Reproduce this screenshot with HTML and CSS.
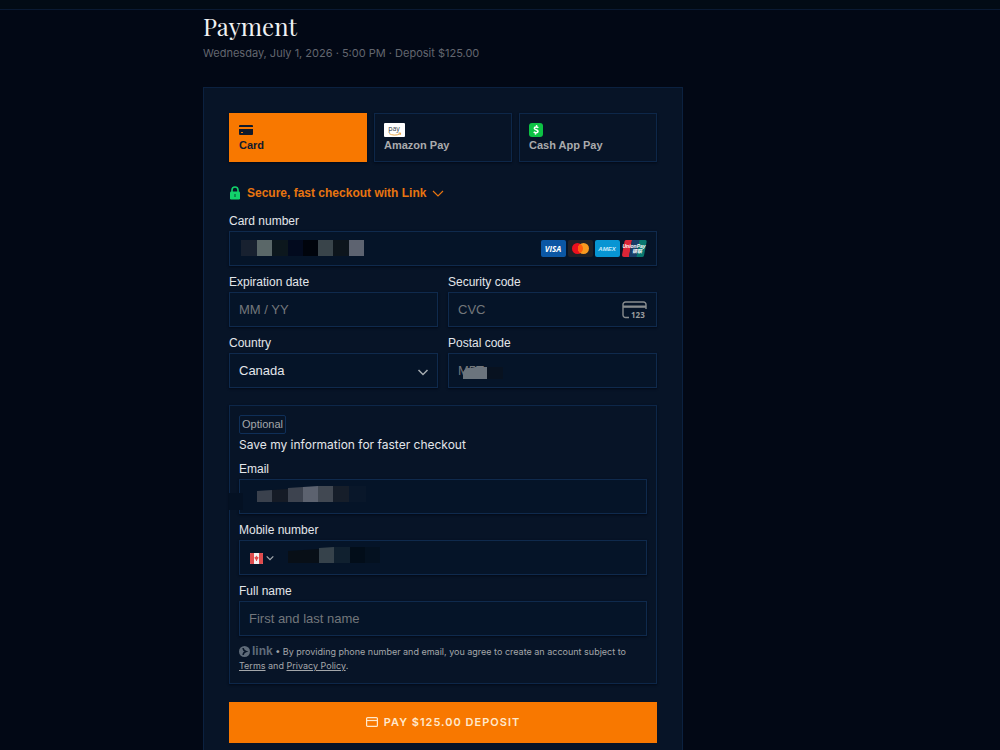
FILE: index.html
```
<!DOCTYPE html>
<html lang="en">
<head>
    <meta charset="UTF-8">
    <meta name="viewport" content="width=device-width, initial-scale=1.0">
    <title>Payment</title>
    <link rel="stylesheet" href="styles.css">
</head>
<body>
    <header class="topbar"></header>

    <main class="container">
        <h1>Payment</h1>
        <p class="summary">Wednesday, July 1, 2026 · 5:00 PM · Deposit $125.00</p>

        <form class="card">
            <div class="methods">
                <button type="button" class="method active">
                    <svg width="14" height="14" viewBox="0 0 14 14"><path d="M1 2h12a1 1 0 0 1 1 1v1H0V3a1 1 0 0 1 1-1z" fill="#101a2c"/><path d="M0 6h14v5a1 1 0 0 1-1 1H1a1 1 0 0 1-1-1z" fill="#101a2c"/><path d="M2 9h2v1H2z" fill="#f87800"/></svg>
                    <span>Card</span>
                </button>
                <button type="button" class="method">
                    <svg width="21" height="14" viewBox="0 0 21 14"><rect width="21" height="14" rx="1" fill="#fff"/><text x="10" y="8" text-anchor="middle" class="pay-text">pay</text><path d="M5 10.500c3 2 7.500 2.200 11 .3M14.500 10h2.200l-.6 2" fill="none" stroke="#e9a13b" stroke-width=".9"/></svg>
                    <span>Amazon Pay</span>
                </button>
                <button type="button" class="method">
                    <svg width="14" height="14" viewBox="0 0 14 14"><rect width="14" height="14" rx="3" fill="#0dc244"/><path d="M9.300 4.700C8.400 3.700 5.400 3.500 5.300 5.200c0 2 4 1.200 3.700 3.300-.3 1.700-3.100 1.500-4.300.4M7.700 2.200l-.3 1.500M6.700 10l-.3 1.700" fill="none" stroke="#fff" stroke-width="1.500"/></svg>
                    <span>Cash App Pay</span>
                </button>
            </div>

            <button type="button" class="link-toggle">
                <svg width="12" height="14" viewBox="0 0 12 14"><path d="M3 6V4a3 3 0 0 1 6 0v2" fill="none" stroke="#12d26b" stroke-width="1.600"/><rect x="1" y="5.500" width="10" height="8" rx="1.200" fill="#12d26b"/><path d="M5.400 8h1.200v3H5.400z" fill="#08603a"/></svg>
                <span>Secure, fast checkout with Link</span>
                <svg width="12" height="12" viewBox="0 0 12 12"><path d="M1 4l5 5 5-5" fill="none" stroke="#e87510" stroke-width="1.200"/></svg>
            </button>

            <div class="form-group first">
                <label for="number">Card number</label>
                <div class="control">
                    <input type="text" id="number">
                    <svg class="mask mask-number" width="123" height="16" viewBox="0 0 123 16" shape-rendering="crispEdges"><path d="M0 0h16v16H0z" fill="#182130"/><path d="M16 0h15v16H16z" fill="#5a6768"/><path d="M31 0h16v16H31z" fill="#0c171d"/><path d="M47 0h15v16H47z" fill="#020a1e"/><path d="M62 0h15v16H62z" fill="#00040c"/><path d="M77 0h15v16H77z" fill="#39444a"/><path d="M92 0h16v16H92z" fill="#0d151c"/><path d="M108 0h15v16h-15z" fill="#5d6370"/></svg>
                    <div class="brands">
                        <svg width="25" height="17" viewBox="0 0 25 17"><rect width="25" height="17" rx="2" fill="#0b57a4"/><text x="12" y="12" text-anchor="middle" class="visa-text">VISA</text></svg>
                        <svg width="25" height="17" viewBox="0 0 25 17"><rect width="25" height="17" rx="2" fill="#202127"/><circle cx="9.500" cy="8.500" r="5.500" fill="#eb101e"/><circle cx="15.500" cy="8.500" r="5.500" fill="#f79a20"/><path d="M12.500 3.900a5.500 5.500 0 0 1 0 9.200 5.500 5.500 0 0 1 0-9.200z" fill="#ff5c0c"/></svg>
                        <svg width="25" height="17" viewBox="0 0 25 17"><rect width="25" height="17" rx="2" fill="#0795d3"/><text x="12" y="11" text-anchor="middle" class="amex-text">AMEX</text></svg>
                        <svg width="25" height="17" viewBox="0 0 25 17"><path d="M4 0h6L7 17H2a2 2 0 0 1-2-2L2.500 1.500Q2.800 0 4 0z" fill="#dc2537"/><path d="M10 0h8l-3 17H7z" fill="#183d68"/><path d="M17.500 0H23q2 0 1.600 2L22 15.500Q21.700 17 20 17h-5.500z" fill="#08776f"/><text x="12" y="8" text-anchor="middle" class="union-text">UnionPay</text><text x="15" y="13" text-anchor="middle" class="union-text">银联</text></svg>
                    </div>
                </div>
            </div>

            <div class="form-row">
                <div class="form-group">
                    <label for="expiry">Expiration date</label>
                    <input type="text" id="expiry" placeholder="MM / YY">
                </div>
                <div class="form-group">
                    <label for="cvc">Security code</label>
                    <div class="control">
                        <input type="text" id="cvc" placeholder="CVC">
                        <svg class="cvc-icon" width="26" height="18" viewBox="0 0 26 18"><path d="M7 16.500H3.500a2.500 2.500 0 0 1-2.500-2.500V3.500A2.500 2.500 0 0 1 3.500 1h18A2.500 2.500 0 0 1 24 3.500V8" fill="none" stroke="#888c8e" stroke-width="1.400"/><path d="M1 4.500h23v2.300H1z" fill="#888c8e"/><text x="9" y="17" class="cvc-text">123</text></svg>
                    </div>
                </div>
            </div>

            <div class="form-row">
                <div class="form-group">
                    <label for="country">Country</label>
                    <div class="control">
                        <select id="country">
                            <option>Canada</option>
                        </select>
                        <svg class="chevron" width="12" height="12" viewBox="0 0 12 12"><path d="M1.500 4L6 8.500 10.500 4" fill="none" stroke="#a5abb0" stroke-width="1.500"/></svg>
                    </div>
                </div>
                <div class="form-group">
                    <label for="postal">Postal code</label>
                    <div class="control">
                        <input type="text" id="postal" placeholder="M5T">
                        <svg class="mask mask-postal" width="40" height="13" viewBox="0 0 40 13"><path d="M0 6l3-4h5l4-1h12v12H0z" fill="#6b747d"/><path d="M24 1h16v12H24z" fill="#081220"/></svg>
                    </div>
                </div>
            </div>

            <section class="save-info">
                <span class="badge">Optional</span>
                <p class="save-title">Save my information for faster checkout</p>

                <div class="form-group">
                    <label for="email">Email</label>
                    <div class="control">
                        <input type="email" id="email">
                        <svg class="mask mask-email" width="137" height="25" viewBox="0 0 137 25"><path d="M0 7h14v17H0z" fill="#041123"/><path d="M28 5l15-1v12H28z" fill="#3a414d"/><path d="M43 4l16-1v13H43z" fill="#151b26"/><path d="M59 2l15-1v15H59z" fill="#3d434f"/><path d="M74 1l15-1v16H74z" fill="#5c626f"/><path d="M89 0h15v16H89z" fill="#414852"/><path d="M104 0h16v16h-16z" fill="#161e2a"/><path d="M120 0h17v16h-17z" fill="#09172a"/></svg>
                    </div>
                </div>

                <div class="form-group">
                    <label for="phone">Mobile number</label>
                    <div class="control">
                        <input type="tel" id="phone">
                        <button type="button" class="flag" aria-label="Phone country">
                            <svg width="13" height="11" viewBox="0 0 13 11"><rect width="13" height="11" rx="1" fill="#f2efef"/><path d="M1 0h3v11H1a1 1 0 0 1-1-1V1a1 1 0 0 1 1-1zM9 0h3a1 1 0 0 1 1 1v9a1 1 0 0 1-1 1H9z" fill="#df4b4d"/><path d="M6.500 2.500l.8 1.300 1.400.6-1 2H7v1.600H6V6.400h-.7l-1-2 1.400-.6z" fill="#df4b4d"/></svg>
                            <svg width="8" height="8" viewBox="0 0 8 8"><path d="M.7 2.300L4 5.600l3.300-3.300" fill="none" stroke="#a5abb0" stroke-width="1.200"/></svg>
                        </button>
                        <svg class="mask mask-phone" width="92" height="16" viewBox="0 0 92 16"><path d="M0 4l31-2v14H0z" fill="#080f17"/><path d="M31 1l15-1v16H31z" fill="#36424b"/><path d="M46 0h16v16H46z" fill="#10202f"/><path d="M62 0h15v16H62z" fill="#020d19"/><path d="M77 0h15v16H77z" fill="#041120"/></svg>
                    </div>
                </div>

                <div class="form-group">
                    <label for="name">Full name</label>
                    <input type="text" id="name" placeholder="First and last name">
                </div>

                <p class="legal">
                    <span class="link-logo"><svg width="11" height="11" viewBox="0 0 11 11"><circle cx="5.500" cy="5.500" r="5.500" fill="#5f6b79"/><path d="M4 2.200c.3 1.700 1.200 2.700 2.900 3.300C5.200 6.100 4.300 7.100 4 8.800" fill="none" stroke="#081527" stroke-width="1.700"/></svg>link</span>
                    • By providing phone number and email, you agree to create an account subject to
                    <a href="#">Terms</a> and <a href="#">Privacy Policy</a>.
                </p>
            </section>

            <button type="submit" class="pay">
                <svg width="12" height="10" viewBox="0 0 12 10"><rect x=".6" y=".6" width="10.800" height="8.800" rx="1" fill="none" stroke="#ffe8cc" stroke-width="1.200"/><path d="M1 3.500h10" stroke="#ffe8cc" stroke-width="1.200"/></svg>
                <span>PAY $125.00 DEPOSIT</span>
            </button>
        </form>
    </main>
</body>
</html>
```
FILE: styles.css
```
* {
    box-sizing: border-box;
}
body {
    margin: 0;
    background-color: #020815;
    color: #e3e6ea;
    font-family: "Liberation Sans", Arial, sans-serif;
    font-size: 12px;
}
.topbar {
    height: 10px;
    background-color: #020b15;
    border-bottom: 1px solid #0a1a33;
}
.container {
    max-width: 594px;
    margin: 0 auto;
}
h1 {
    margin: 0;
    font-family: "Playfair Display", "Liberation Serif", serif;
    font-size: 24px;
    font-weight: normal;
    line-height: 32px;
    color: #f0f1f3;
}
.summary {
    margin: 3px 0 26px;
    font-family: Inter, sans-serif;
    font-size: 11px;
    line-height: 16px;
    color: #62666f;
}
.card {
    max-width: 480px;
    padding: 25px;
    background-color: #071427;
    border: 1px solid #0b2140;
}
button {
    font-family: inherit;
    cursor: pointer;
}
svg {
    display: block;
    flex-shrink: 0;
}

/* payment methods */
.methods {
    display: grid;
    grid-template-columns: 1fr 1fr 1fr;
    gap: 7px;
}
.method {
    display: flex;
    flex-direction: column;
    align-items: flex-start;
    gap: 1px;
    height: 49px;
    padding: 9px 9px 0;
    background-color: #071427;
    border: 1px solid #0d2749;
    box-shadow: 0 1px 2px #030a17;
    color: #aaabad;
    font-size: 11px;
    font-weight: bold;
    line-height: 14px;
}
.method.active {
    background-color: #f87800;
    border-color: #f87800;
    color: #101a2c;
}
.link-toggle {
    display: flex;
    align-items: center;
    gap: 6px;
    height: 16px;
    margin-top: 23px;
    padding: 0;
    background: none;
    border: none;
    color: #e87510;
    font-size: 12px;
    font-weight: bold;
}

/* fields */
.form-group {
    margin-top: 9px;
}
.form-group.first {
    margin-top: 13px;
}
.form-row {
    display: grid;
    grid-template-columns: 1fr 1fr;
    gap: 10px;
}
label {
    display: block;
    margin-bottom: 2px;
    font-size: 12px;
    line-height: 15px;
}
input, select {
    display: block;
    width: 100%;
    height: 35px;
    padding: 0 9px;
    background-color: #051428;
    border: 1px solid #0f2a4d;
    border-radius: 0;
    box-shadow: 0 1px 2px #030a17;
    color: #e3e6ea;
    font-family: inherit;
    font-size: 13px;
    appearance: none;
}
input::placeholder {
    color: #73777b;
    opacity: 1;
}
.control {
    position: relative;
}
.brands {
    position: absolute;
    top: 9px;
    right: 10px;
    display: flex;
    gap: 2px;
}
.cvc-icon {
    position: absolute;
    top: 9px;
    right: 9px;
}
.chevron {
    position: absolute;
    top: 13px;
    right: 9px;
}
.flag {
    position: absolute;
    top: 10px;
    left: 11px;
    display: flex;
    align-items: center;
    gap: 3px;
    height: 16px;
    padding: 0;
    background: none;
    border: none;
}

/* hidden values */
.mask {
    position: absolute;
}
.mask-number {
    top: 9px;
    left: 12px;
}
.mask-postal {
    top: 13px;
    left: 15px;
}
.mask-email {
    top: 7px;
    left: -10px;
}
.mask-phone {
    top: 7px;
    left: 49px;
}

/* icon lettering */
.pay-text {
    font: 7px "Open Sans", sans-serif;
    fill: #333e48;
}
.visa-text {
    font: italic bold 8px "Open Sans", sans-serif;
    fill: #fff;
}
.amex-text {
    font: italic bold 6px "Liberation Sans", sans-serif;
    fill: #c9eafa;
}
.union-text {
    font: italic bold 5px "Liberation Sans", "Noto Sans CJK SC", sans-serif;
    fill: #fff;
}
.cvc-text {
    font: bold 8px "Open Sans", sans-serif;
    fill: #9a9d9e;
}

/* save info */
.save-info {
    margin-top: 17px;
    padding: 9px 9px 10px;
    border: 1px solid #0d2749;
    box-shadow: 0 1px 2px #030a17;
}
.badge {
    display: block;
    width: fit-content;
    padding: 0 2px;
    border: 1px solid #0f2f58;
    border-radius: 2px;
    color: #a4a7aa;
    font-size: 11px;
    line-height: 17px;
}
.save-title {
    margin: 3px 0 0;
    font-family: Inter, sans-serif;
    font-size: 12px;
    line-height: 16px;
}
.legal {
    margin: 9px 0 0;
    color: #a4a7aa;
    font-family: Inter, sans-serif;
    font-size: 9px;
    line-height: 14px;
}
.legal a {
    color: inherit;
}
.link-logo {
    color: #5f6b79;
    font-family: "Liberation Sans", sans-serif;
    font-size: 12px;
    font-weight: bold;
    line-height: 12px;
}
.link-logo svg {
    display: inline-block;
    margin-right: 2px;
    vertical-align: -2px;
}
.pay {
    display: flex;
    align-items: center;
    justify-content: center;
    gap: 6px;
    width: 100%;
    height: 41px;
    margin-top: 18px;
    padding: 0 0 1px;
    background-color: #f87800;
    border: none;
    color: #ffe8cc;
    font-family: Inter, sans-serif;
    font-size: 11px;
    font-weight: 600;
    letter-spacing: 1px;
}
```
